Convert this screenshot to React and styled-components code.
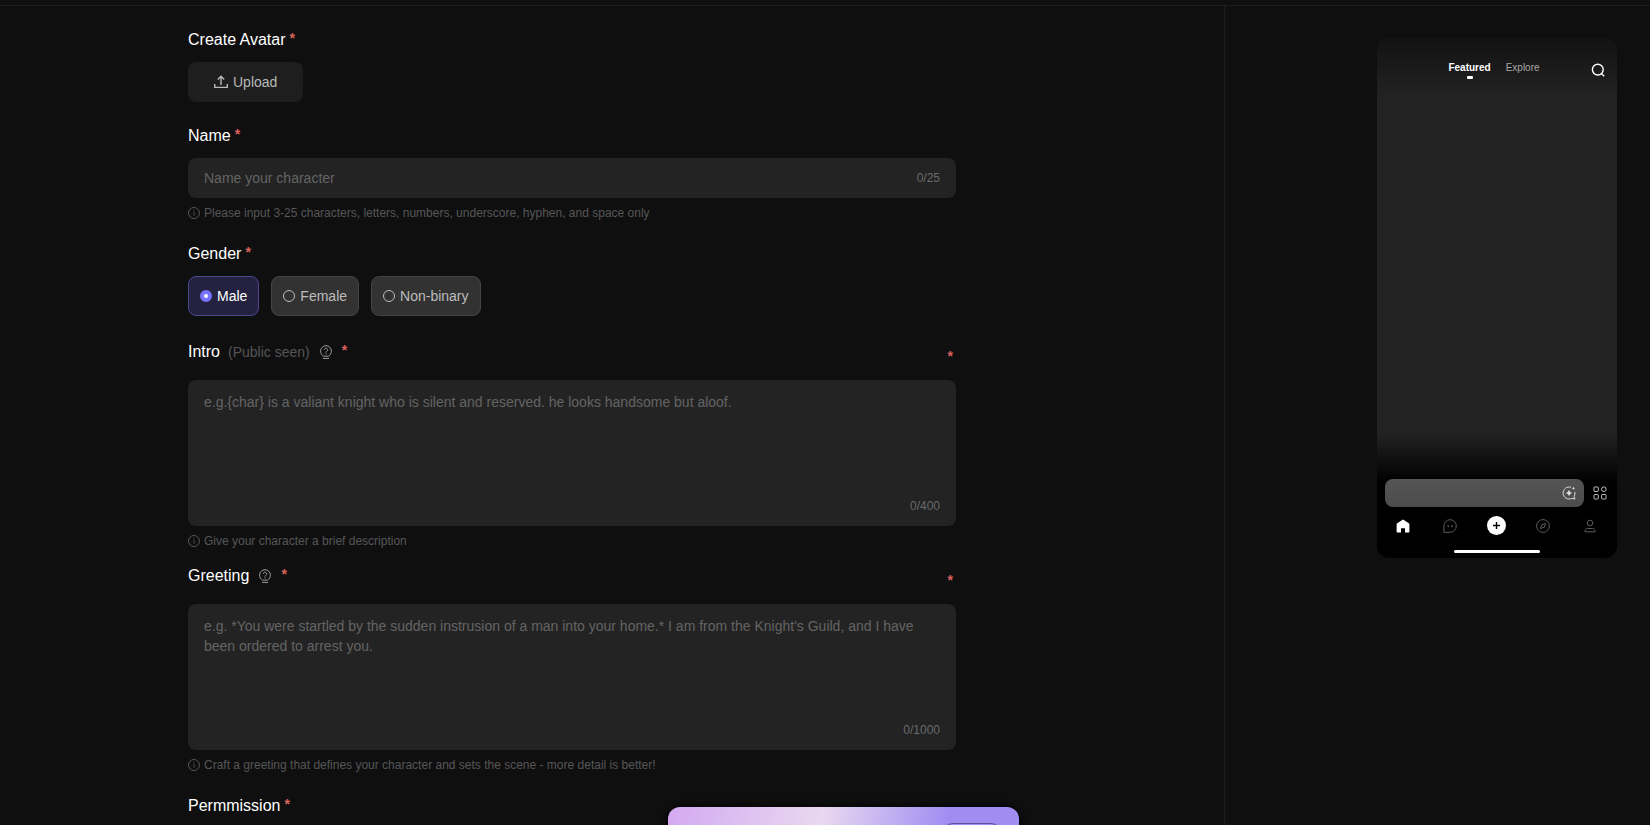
import { useState } from 'react';
import styled, { createGlobalStyle } from 'styled-components';

const GlobalStyle = createGlobalStyle`
  *, *::before, *::after {
    box-sizing: border-box;
  }

  body {
    margin: 0;
    background: #0f0f10;
    color: #fff;
    font-family: Arial, "Liberation Sans", sans-serif;
    font-size: 14px;
  }

  button, input, textarea {
    font-family: inherit;
  }
`;

const Page = styled.div`
  display: flex;
  flex-direction: column;
  min-height: 100vh;
`;

const TopBar = styled.header`
  height: 6px;
  border-bottom: 1px solid #1e1e1f;
`;

const Content = styled.div`
  flex: 1;
  display: flex;
`;

const FormColumn = styled.main`
  flex: 1;
  padding: 22px 24px 0 188px;
`;

const Form = styled.form`
  max-width: 768px;
`;

const Item = styled.div`
  margin-bottom: ${({ $tight }) => ($tight ? '14px' : '22px')};

  &:last-child {
    margin-bottom: 0;
  }
`;

const ItemHeader = styled.div`
  display: flex;
  justify-content: space-between;
  height: ${({ $tall }) => ($tall ? '32px' : '24px')};
  margin-bottom: 10px;
`;

const Label = styled.label`
  display: flex;
  align-items: center;
  gap: ${({ $wide }) => ($wide ? '10px' : '4px')};
  height: ${({ $wide }) => ($wide ? '28px' : '24px')};
  font-size: 16px;
  line-height: 22px;
`;

const LabelText = styled.span`
  display: flex;
  align-items: center;
  gap: 8px;

  small {
    font-size: 14px;
    color: #555;
  }
`;

const Star = styled.span`
  padding-bottom: 4px;
  font-size: 14px;
  font-weight: 700;
  line-height: 20px;
  color: #dc625d;
`;

const SideStar = styled(Star)`
  align-self: flex-end;
  padding-right: 3px;
`;

const UploadButton = styled.button`
  display: inline-flex;
  align-items: center;
  gap: 4px;
  height: 40px;
  padding: 0 26px 0 25px;
  border: 0;
  border-radius: 8px;
  background: #1e1e1e;
  color: #b9b9b9;
  font-size: 14px;
  vertical-align: top;
`;

const Field = styled.div`
  display: flex;
  flex-direction: ${({ $multiline }) => ($multiline ? 'column' : 'row')};
  align-items: ${({ $multiline }) => ($multiline ? 'stretch' : 'center')};
  height: ${({ $multiline }) => ($multiline ? '146px' : '40px')};
  padding: ${({ $multiline }) => ($multiline ? '12px 16px' : '0 16px')};
  border-radius: 8px;
  background: #232323;
`;

const Input = styled.input`
  flex: 1;
  min-width: 0;
  padding: 0;
  border: 0;
  outline: 0;
  background: transparent;
  color: #fff;
  font-size: 14px;
  line-height: 20px;

  &::placeholder {
    color: #636363;
  }
`;

const TextArea = styled(Input)`
  resize: none;
  overflow: hidden;
`;

const Counter = styled.span`
  align-self: ${({ $end }) => ($end ? 'flex-end' : 'center')};
  color: #696969;
  font-size: 12px;
  line-height: 16px;
`;

const Hint = styled.p`
  display: flex;
  align-items: center;
  gap: 4px;
  margin: 8px 0 0;
  color: #565656;
  font-size: 12px;
  line-height: 14px;
`;

const RadioGroup = styled.div`
  display: flex;
  gap: 12px;
`;

const RadioOption = styled.label`
  display: flex;
  align-items: center;
  gap: 5px;
  height: 40px;
  padding: 0 11px;
  border: 1px solid ${({ $active }) => ($active ? '#4c4890' : '#434343')};
  border-radius: 8px;
  background: ${({ $active }) => ($active ? '#242240' : '#323232')};
  color: ${({ $active }) => ($active ? '#fff' : '#bcbcbc')};
`;

const Radio = styled.input`
  appearance: none;
  width: 12px;
  height: 12px;
  margin: 0;
  border: 1px solid #bcbcbc;
  border-radius: 50%;

  &:checked {
    border: 4px solid #7a73fa;
    background: #fff;
  }
`;

const PreviewColumn = styled.aside`
  display: flex;
  justify-content: flex-end;
  align-items: flex-start;
  width: 426px;
  padding: 32px 33px 0 0;
  border-left: 1px solid #1e1e1f;
`;

const Phone = styled.div`
  display: flex;
  flex-direction: column;
  width: 240px;
  height: 520px;
  border-radius: 12px;
  overflow: hidden;
  background: linear-gradient(#121212 0, #232323 60px, #232323 394px, #000 445px);
`;

const PhoneHeader = styled.div`
  display: grid;
  grid-template-columns: 1fr auto 1fr;
  align-items: center;
  height: 64px;
  padding: 0 12px 0 6px;
`;

const PhoneTabs = styled.div`
  display: flex;
  grid-column: 2;
  gap: 15px;
`;

const PhoneTab = styled.span`
  display: flex;
  flex-direction: column;
  align-items: center;
  gap: 2px;
  color: ${({ $active }) => ($active ? '#fff' : '#a6a6a6')};
  font-size: 10px;
  font-weight: ${({ $active }) => ($active ? 700 : 400)};
  line-height: 12px;

  &::after {
    content: '';
    width: 6px;
    height: 3px;
    border-radius: 1px;
    background: ${({ $active }) => ($active ? '#fff' : 'transparent')};
  }
`;

const PhoneSearch = styled.span`
  display: flex;
  justify-content: flex-end;
`;

const PhoneFooter = styled.div`
  margin-top: auto;
`;

const PhonePromptRow = styled.div`
  display: flex;
  align-items: center;
  gap: 9px;
  padding: 0 10px 0 8px;
`;

const PhonePrompt = styled.div`
  flex: 1;
  display: flex;
  align-items: center;
  justify-content: flex-end;
  height: 28px;
  padding-right: 8px;
  border-radius: 8px;
  background: linear-gradient(#545454, #4c4c4c);
`;

const PhoneNav = styled.div`
  display: flex;
  align-items: center;
  justify-content: space-between;
  height: 37px;
  padding: 0 17px 0 16px;

  span {
    display: flex;
    justify-content: center;
    width: 20px;
  }
`;

const HomeIndicator = styled.div`
  width: 86px;
  height: 3px;
  margin: 6px auto 5px;
  border-radius: 2px;
  background: #fff;
`;

const BannerLayer = styled.div`
  position: fixed;
  right: 0;
  bottom: -46px;
  left: 36px;
  display: flex;
  justify-content: center;
`;

const Banner = styled.div`
  display: flex;
  align-items: center;
  justify-content: flex-end;
  width: 351px;
  height: 64px;
  padding-right: 16px;
  border-radius: 12px;
  background: linear-gradient(100deg, #d3a9f1 0%, #e9d8f0 43%, #a08df2 78%, #a08df2 100%);
  box-shadow: 0 0 8px #000;
`;

const BannerButton = styled.button`
  width: 62px;
  height: 32px;
  border: 1px solid #5d5299;
  border-radius: 12px;
  background: transparent;
`;

const UploadIcon = () => (
  <svg width="16" height="16" viewBox="0 0 16 16" fill="none" stroke="currentColor" strokeWidth="1.4">
    <path d="M8 11V2.4M4.8 5.4 8 2.2l3.200 3.200M1.700 10v3.400h12.600V10" />
  </svg>
);

const InfoIcon = () => (
  <svg width="12" height="12" viewBox="0 0 12 12" fill="none" stroke="currentColor">
    <circle cx="6" cy="6" r="5.5" />
    <path d="M6 5.200v3.600M6 3.200v1.100" />
  </svg>
);

const TipIcon = () => (
  <svg width="12" height="14" viewBox="0 0 12 14" fill="none" stroke="#9a9a9a">
    <path d="M3.600 11.200C1.700 10.200.6 8.300.6 6.100a5.400 5.400 0 0 1 10.800 0c0 2.200-1.100 4.100-3 5.100zM3 13.400h6" />
    <path d="M4.300 4.900a1.700 1.700 0 1 1 2.600 1.400c-.6.4-.9.7-.9 1.300M6 8.400v1.100" />
  </svg>
);

const SearchIcon = () => (
  <svg width="14" height="14" viewBox="0 0 14 14" fill="none" stroke="#fff" strokeWidth="1.400">
    <circle cx="6.800" cy="6.600" r="5.400" />
    <path d="m10.200 10.400 3 2.800" />
  </svg>
);

const SparkIcon = () => (
  <svg width="14" height="14" viewBox="0 0 14 14" fill="none" stroke="#dedede">
    <path d="M9 1.300A6 6 0 1 0 9.700 12.400L13 13l-1-2.600A6 6 0 0 0 12.900 6" />
    <path d="M7 3.900 8 6 10.100 7 8 8 7 10.100 6 8 3.900 7 6 6zM11.500.4l.5 1.300 1.300.5-1.300.5-.5 1.300-.5-1.300-1.300-.5 1.300-.5z" fill="#dedede" stroke="none" />
    <path d="M7 4.800v4.400M4.800 7h4.400" />
  </svg>
);

const GridIcon = () => (
  <svg width="14" height="14" viewBox="0 0 14 14" fill="none" stroke="#bdbdbd">
    <rect x="1" y="1" width="4.300" height="4.500" rx=".6" />
    <circle cx="10.800" cy="3.200" r="2.300" />
    <rect x="1" y="8.500" width="4.300" height="4.500" rx=".6" />
    <rect x="8.600" y="8.500" width="4.400" height="4.500" rx=".6" />
  </svg>
);

const HomeIcon = () => (
  <svg width="14" height="14" viewBox="0 0 14 14" fill="#fff">
    <path d="M6.200.9a1.300 1.300 0 0 1 1.600 0l5 3.400q.6.4.6 1v7.200q0 .9-.9.900H9V9.200H5v4.200H1.500q-.9 0-.9-.9V5.300q0-.6.600-1z" />
  </svg>
);

const ChatIcon = () => (
  <svg width="14" height="14" viewBox="0 0 14 14" fill="none" stroke="#5c5c5c">
    <path d="M7 .7a6.300 6.300 0 1 1 0 12.600H.9V7A6.200 6.200 0 0 1 7 .7z" />
    <path d="M5.200 6v2.200M8.900 6v2.200" strokeWidth="1.300" />
  </svg>
);

const PlusIcon = () => (
  <svg width="19" height="19" viewBox="0 0 19 19">
    <circle cx="9.500" cy="9.500" r="9.500" fill="#fff" />
    <path d="M9.500 6v7M6 9.500h7" stroke="#000" strokeWidth="1.400" />
  </svg>
);

const CompassIcon = () => (
  <svg width="14" height="14" viewBox="0 0 14 14" fill="none" stroke="#5c5c5c">
    <circle cx="7" cy="7" r="6.400" />
    <path d="M9.500 4.500 8.400 8.100 4.500 9.500 5.700 5.800z" />
  </svg>
);

const UserIcon = () => (
  <svg width="14" height="14" viewBox="0 0 14 14" fill="none" stroke="#5c5c5c">
    <circle cx="7" cy="4" r="2.800" />
    <path d="M2 12.800v-1.100c0-1.400 1-2.200 2.400-2.200h5.200c1.400 0 2.400.8 2.400 2.200v1.100z" />
  </svg>
);

const genders = ['Male', 'Female', 'Non-binary'];

const TextItem = ({ id, label, note, placeholder, max, hint, tight }) => {
  const [value, setValue] = useState('');

  return (
    <Item $tight={tight}>
      <ItemHeader $tall>
        <Label htmlFor={id} $wide>
          <LabelText>
            {label}
            {note && <small>{note}</small>}
          </LabelText>
          <TipIcon />
          <Star>*</Star>
        </Label>
        <SideStar>*</SideStar>
      </ItemHeader>
      <Field $multiline>
        <TextArea
          as="textarea"
          id={id}
          placeholder={placeholder}
          maxLength={max}
          value={value}
          onChange={(e) => setValue(e.target.value)}
        />
        <Counter $end>{value.length}/{max}</Counter>
      </Field>
      <Hint><InfoIcon />{hint}</Hint>
    </Item>
  );
};

const PhonePreview = () => (
  <Phone>
    <PhoneHeader>
      <PhoneTabs>
        <PhoneTab $active>Featured</PhoneTab>
        <PhoneTab>Explore</PhoneTab>
      </PhoneTabs>
      <PhoneSearch><SearchIcon /></PhoneSearch>
    </PhoneHeader>
    <PhoneFooter>
      <PhonePromptRow>
        <PhonePrompt><SparkIcon /></PhonePrompt>
        <GridIcon />
      </PhonePromptRow>
      <PhoneNav>
        <span><HomeIcon /></span>
        <span><ChatIcon /></span>
        <span><PlusIcon /></span>
        <span><CompassIcon /></span>
        <span><UserIcon /></span>
      </PhoneNav>
      <HomeIndicator />
    </PhoneFooter>
  </Phone>
);

const App = () => {
  const [name, setName] = useState('');
  const [gender, setGender] = useState('Male');

  return (
    <Page>
      <GlobalStyle />
      <TopBar />
      <Content>
        <FormColumn>
          <Form>
            <Item>
              <ItemHeader>
                <Label htmlFor="avatar">Create Avatar<Star>*</Star></Label>
              </ItemHeader>
              <UploadButton id="avatar" type="button"><UploadIcon />Upload</UploadButton>
            </Item>

            <Item>
              <ItemHeader>
                <Label htmlFor="name">Name<Star>*</Star></Label>
              </ItemHeader>
              <Field>
                <Input
                  id="name"
                  placeholder="Name your character"
                  maxLength={25}
                  value={name}
                  onChange={(e) => setName(e.target.value)}
                />
                <Counter>{name.length}/25</Counter>
              </Field>
              <Hint>
                <InfoIcon />
                Please input 3-25 characters, letters, numbers, underscore, hyphen, and space only
              </Hint>
            </Item>

            <Item>
              <ItemHeader>
                <Label as="span" id="gender">Gender<Star>*</Star></Label>
              </ItemHeader>
              <RadioGroup role="radiogroup" aria-labelledby="gender">
                {genders.map((item) => (
                  <RadioOption key={item} $active={item === gender}>
                    <Radio
                      type="radio"
                      name="gender"
                      checked={item === gender}
                      onChange={() => setGender(item)}
                    />
                    {item}
                  </RadioOption>
                ))}
              </RadioGroup>
            </Item>

            <TextItem
              id="intro"
              label="Intro"
              note="(Public seen)"
              placeholder="e.g.{char} is a valiant knight who is silent and reserved. he looks handsome but aloof."
              max={400}
              hint="Give your character a brief description"
              tight
            />

            <TextItem
              id="greeting"
              label="Greeting"
              placeholder="e.g. *You were startled by the sudden instrusion of a man into your home.* I am from the Knight's Guild, and I have been ordered to arrest you."
              max={1000}
              hint="Craft a greeting that defines your character and sets the scene - more detail is better!"
            />

            <Item>
              <Label as="span">Permmission<Star>*</Star></Label>
            </Item>
          </Form>
        </FormColumn>

        <PreviewColumn>
          <PhonePreview />
        </PreviewColumn>
      </Content>

      <BannerLayer>
        <Banner>
          <BannerButton type="button" aria-label="Open" />
        </Banner>
      </BannerLayer>
    </Page>
  );
};

export default App;
